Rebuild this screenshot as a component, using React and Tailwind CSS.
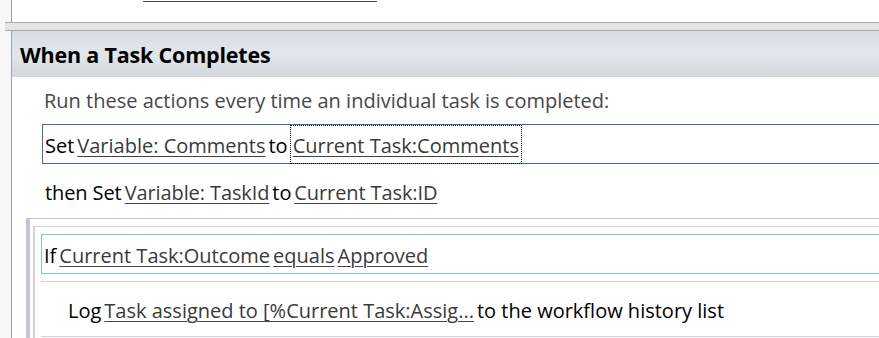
import React from "react";

const F = { fontFamily: "'Open Sans', 'Noto Sans', sans-serif" };

function L({ children, className = "" }) {
  return (
    <span
      className={
        "text-[#3a3a3a] underline decoration-[#444] decoration-1 underline-offset-[3px] whitespace-nowrap " +
        className
      }
    >
      {children}
    </span>
  );
}

export default function App() {
  return (
    <div
      className="w-[879px] h-[338px] overflow-hidden bg-[#f7f7f7] flex flex-col text-[20px] leading-[26px] text-black"
      style={F}
    >
      {/* top panel */}
      <div className="ml-[11px] h-[22px] shrink-0 bg-white border-l border-[#a0a0a0] overflow-hidden relative">
        <div className="ml-[131px] mt-[1px] w-[234px] border-b border-[#444]" />
      </div>
      {/* separator band */}
      <div className="ml-[5px] h-[9px] shrink-0 bg-[#e4e4e4] border-y border-[#a9a9a9]" />
      {/* section */}
      <div className="ml-[11px] flex-1 bg-white border-l border-[#a0a0a0] flex flex-col overflow-hidden">
        <div className="h-[46px] shrink-0 flex items-center pl-[8px] bg-[linear-gradient(to_bottom,#d8dde5_0%,#e2e6ec_50%,#d2d7df_100%)]">
          <span className="text-[21.5px] font-bold leading-none tracking-[-0.2px] pt-[2px]">When a Task Completes</span>
        </div>
        <div className="h-[45px] shrink-0 flex items-center pl-[32px] pt-[2px] text-[#474747]">
          Run these actions every time an individual task is completed:
        </div>
        <div className="pl-[30px] shrink-0">
          <div className="h-[40px] flex items-center border-y border-l border-[#4a67a5] pl-[2px] gap-[3px] mt-[2px]">
            <span className="pt-[3px]">Set</span>
            <L className="pt-[3px]">Variable: Comments</L>
            <span className="pt-[3px]">to</span>
            <span className="outline-1 outline-dotted outline-black px-[2px] h-[37px] flex items-center pt-[3px]">
              <L>Current Task:Comments</L>
            </span>
          </div>
        </div>
        <div className="pl-[33px] h-[54px] shrink-0 flex items-center gap-[3px] pt-[3px] tracking-[-0.1px]">
          <span>then Set</span>
          <L>Variable: TaskId</L>
          <span>to</span>
          <L>Current Task:ID</L>
        </div>
        {/* nested block */}
        <div className="ml-[14px] flex-1 border-l-4 border-t border-[#c5c3d8] pt-[7px] flex flex-col">
          <div className="ml-[3px] flex-1 border-l-2 border-t border-[#d4d4d8] pt-[7px] pl-[6px] flex flex-col">
            <div className="h-[40px] shrink-0 flex items-center border-y border-l border-[#8cc0e2] pl-[2px] pt-[3px] gap-[3px]">
              <span>If</span>
              <L>Current Task:Outcome</L>
              <L>equals</L>
              <L>Approved</L>
            </div>
            <div className="h-[56px] shrink-0 mt-[7px] border-y border-[#d4d4d8] flex items-center pl-[27px] pt-[4px] gap-[3px]">
              <span>Log</span>
              <L>Task assigned to [%Current Task:Assig...</L>
              <span>to the workflow history list</span>
            </div>
          </div>
        </div>
      </div>
    </div>
  );
}
